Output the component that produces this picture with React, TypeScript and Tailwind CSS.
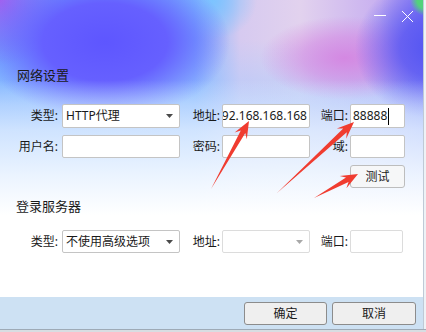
import React from "react";

const field = "h-full border border-[#c4c4c4] rounded-[2px] bg-white flex items-center";
const label = "h-full flex items-center justify-end";

function Caret({ color = "#4a4a4a" }: { color?: string }) {
  return (
    <svg width="7" height="4" viewBox="0 0 7 4">
      <path d="M0 0H7L3.5 4Z" fill={color} />
    </svg>
  );
}

// red annotation arrow, thin tail widening into a swept-back head
function arrow(tx: number, ty: number, px: number, py: number) {
  const dx = px - tx;
  const dy = py - ty;
  const len = Math.hypot(dx, dy);
  const ux = dx / len;
  const uy = dy / len;
  const nx = -uy;
  const ny = ux;
  const headLen = 17;
  const headW = 7;
  const neckW = 2.6;
  const bx = px - ux * headLen;
  const by = py - uy * headLen;
  const kx = px - ux * headLen * 0.72;
  const ky = py - uy * headLen * 0.72;
  const pts = [
    [tx, ty],
    [kx + nx * neckW, ky + ny * neckW],
    [bx + nx * headW, by + ny * headW],
    [px, py],
    [bx - nx * headW, by - ny * headW],
    [kx - nx * neckW, ky - ny * neckW],
  ];
  return pts.map((p) => p.map((v) => v.toFixed(1)).join(",")).join(" ");
}

export default function App() {
  return (
    <div className="relative w-[426px] h-[332px] overflow-hidden bg-[#eef2f6] text-[#1a1a1a] font-['Noto_Sans','Noto_Sans_CJK_SC',sans-serif]">
      <div className="w-[424px] h-[329px] flex flex-col border-r border-[#bfcad6] bg-white bg-[linear-gradient(180deg,rgba(255,255,255,0)_0px,rgba(255,255,255,0)_80px,rgba(232,242,255,0.7)_130px,rgba(242,248,255,0.92)_175px,#ffffff_215px),radial-gradient(circle_16px_at_426px_0px,#4fd27a_0%,#52d27c_55%,rgba(80,210,124,0)_100%),radial-gradient(ellipse_125px_78px_at_105px_42px,#5e56ff_0%,#6660ff_50%,rgba(104,112,255,0)_100%),radial-gradient(ellipse_75px_70px_at_430px_48px,#5556f2_0%,rgba(90,88,242,0.85)_40%,rgba(150,100,240,0)_100%),radial-gradient(ellipse_85px_42px_at_345px_58px,#d488e2_0%,rgba(212,136,226,0.6)_50%,rgba(212,136,226,0)_100%),radial-gradient(circle_65px_at_0px_0px,#a062f0_0%,rgba(160,98,240,0)_100%),radial-gradient(ellipse_45px_40px_at_212px_0px,#7cc4ff_0%,rgba(124,196,255,0)_100%),linear-gradient(180deg,rgba(170,205,255,0)_40px,rgba(168,204,255,0.65)_105px),linear-gradient(90deg,#6aa8ff_0px,#78b2ff_195px,#d6caf0_240px,#e2d2ee_300px,#c8b0f0_380px,#8c80f4_426px)]">
        {/* title bar */}
        <div className="h-[30px] flex justify-end items-start gap-[15px] pt-[9px] pr-[9px]">
          <svg width="12" height="12" viewBox="0 0 12 12">
            <path d="M0 6.5H12" stroke="#fff" strokeWidth="1" />
          </svg>
          <svg width="13" height="13" viewBox="0 0 13 13" className="mt-[1px]">
            <path d="M1 1L12 12M12 1L1 12" stroke="#fff" strokeWidth="1" />
          </svg>
        </div>

        <div className="mt-[35px] pl-[17px] h-[20px] leading-[20px] text-[13px]">网络设置</div>

        <div className="mt-[19px] grid grid-cols-[62px_118px_42px_88px_40px_55px] grid-rows-[24px_23px_23px] gap-y-[7px] text-[12px]">
          <div className={`${label} pr-[4px]`}>类型:</div>
          <div className={`${field} justify-between pl-[3px] pr-[6px]`}>
            <span>HTTP代理</span>
            <Caret />
          </div>
          <div className={`${label} pr-[2px]`}>地址:</div>
          <div className={`${field} justify-end overflow-hidden whitespace-nowrap pr-[2px]`}>
            <span>192.168.168.168</span>
          </div>
          <div className={`${label} pr-[2px]`}>端口:</div>
          <div className={`${field} pl-[2px]`}>
            <span>88888</span>
            <span className="ml-[1px] w-px h-[17px] bg-black" />
          </div>

          <div className={`${label} pr-[4px]`}>用户名:</div>
          <div className={field} />
          <div className={`${label} pr-[2px]`}>密码:</div>
          <div className={field} />
          <div className={`${label} pr-[2px]`}>域:</div>
          <div className={field} />

          <div className="col-start-6 h-full rounded-[3px] border border-[#bdbdbd] bg-[#f6f7f8] flex items-center justify-center">
            测试
          </div>
        </div>

        <div className="mt-[8px] pl-[16px] h-[20px] leading-[20px] text-[13px]">登录服务器</div>

        <div className="mt-[14px] grid grid-cols-[62px_118px_42px_88px_40px_53px] grid-rows-[23px] text-[12px]">
          <div className={`${label} pr-[4px]`}>类型:</div>
          <div className={`${field} justify-between pl-[3px] pr-[6px]`}>
            <span>不使用高级选项</span>
            <Caret />
          </div>
          <div className={`${label} pr-[2px]`}>地址:</div>
          <div className="h-full border border-[#dcdcdc] rounded-[2px] bg-white flex items-center justify-end pr-[6px]">
            <Caret color="#a8a8a8" />
          </div>
          <div className={`${label} pr-[2px]`}>端口:</div>
          <div className="h-full border border-[#dcdcdc] rounded-[2px] bg-white" />
        </div>

        <div className="flex-1" />

        {/* footer */}
        <div className="h-[32px] bg-[#cde1f3] flex justify-end items-start gap-[5px] pt-[5px] pr-[7px] text-[12px]">
          <button className="w-[83px] h-[23px] rounded-[3px] border border-[#8c8c8c] bg-[#efefef] flex items-center justify-center">
            确定
          </button>
          <button className="w-[84px] h-[23px] rounded-[3px] border border-[#8c8c8c] bg-[#efefef] flex items-center justify-center">
            取消
          </button>
        </div>
      </div>
      <div className="h-[3px] border-t border-[#9eaab6] bg-[#d8dde2]" />

      {/* annotation arrows */}
      <svg className="absolute inset-0 pointer-events-none" width="426" height="332" viewBox="0 0 426 332">
        <polygon points={arrow(211, 189, 249, 121)} fill="#f03c30" />
        <polygon points={arrow(277, 193, 354, 122)} fill="#f03c30" />
        <polygon points={arrow(314, 198, 358, 174)} fill="#f03c30" />
      </svg>
    </div>
  );
}
